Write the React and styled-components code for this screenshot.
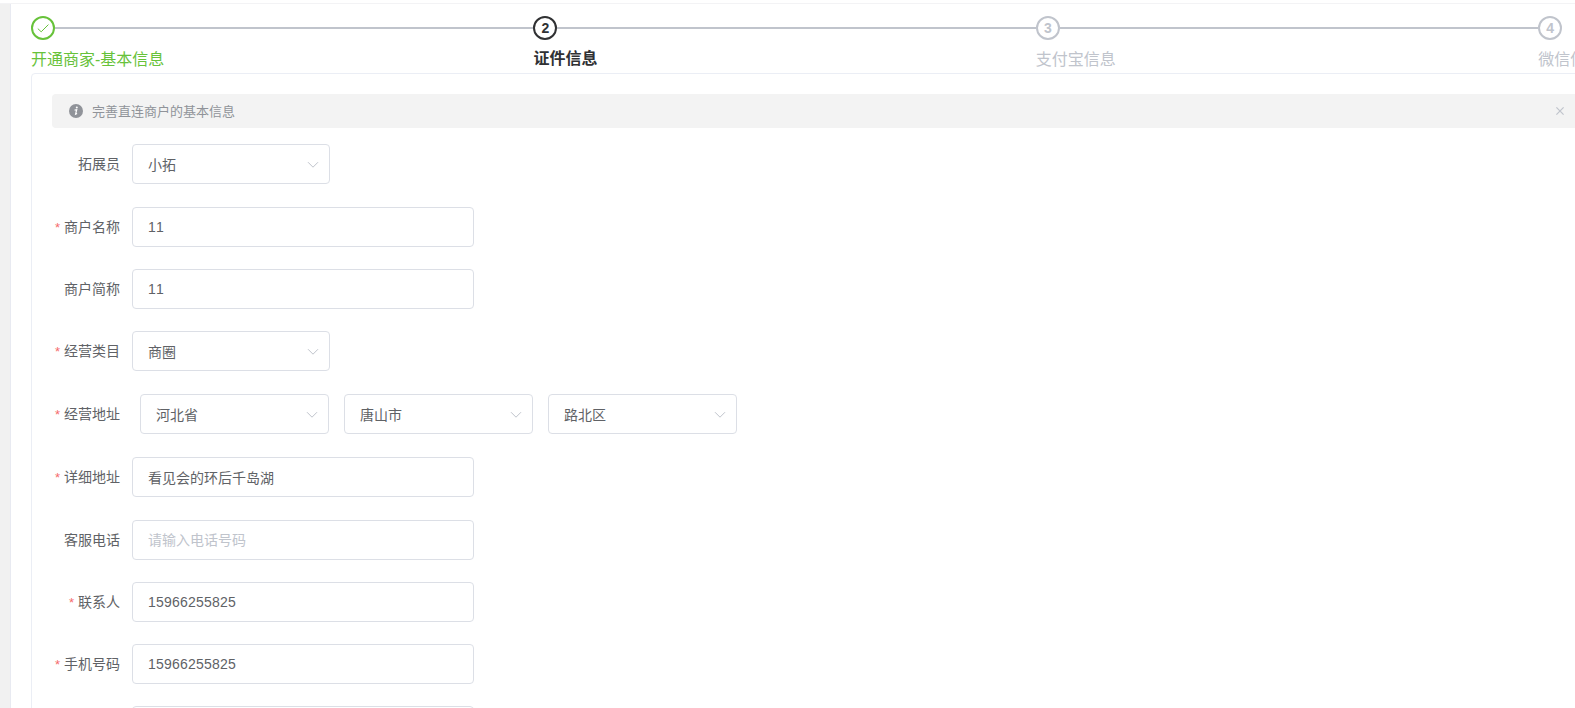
import React, { useState } from "react";
import styled, { createGlobalStyle, css } from "styled-components";

const GlobalStyle = createGlobalStyle`
  * {
    box-sizing: border-box;
  }
  body {
    margin: 0;
    height: 100vh;
    overflow: hidden;
    background-color: #fff;
    font-family: "Liberation Sans", "Noto Sans CJK SC", sans-serif;
    font-size: 14px;
    color: #606266;
  }
`;

const Page = styled.div`
  height: 708px;
  padding-top: 3px;
  overflow: hidden;
`;
const Layout = styled.div`
  display: flex;
  height: 705px;
  border-top: 1px solid #f3f3f5;
`;
const Sidebar = styled.div`
  flex: 0 0 11px;
  background-color: #f1f1f1;
  border-right: 1px solid #e8eaf1;
`;
const Main = styled.main`
  flex: none;
  width: 2030px;
  padding: 12px 0 0 20px;
`;

const Steps = styled.div`
  display: flex;
  height: 57px;
`;
const stepColors = {
  success: "#67c23a",
  process: "#303133",
  wait: "#c0c4cc",
};
const StepItem = styled.div`
  flex: 0 0 502.4px;
  color: ${(props) => stepColors[props.$status]};
`;
const StepHead = styled.div`
  display: flex;
  align-items: center;
`;
const StepIcon = styled.div`
  display: flex;
  justify-content: center;
  align-items: center;
  width: 24px;
  height: 24px;
  border: 2px solid;
  border-radius: 50%;
  font-size: 14px;
  font-weight: 700;
  line-height: 1;
`;
const StepLine = styled.div`
  flex: 1;
  height: 2px;
  background-color: #c0c4cc;
`;
const StepTitle = styled.div`
  font-size: 16px;
  line-height: 40px;
  white-space: nowrap;
  ${(props) =>
    props.$status === "process" &&
    css`
      font-weight: 700;
      line-height: 38px;
    `}
`;

const Card = styled.section`
  height: 900px;
  padding: 20px;
  border: 1px solid #ebeef5;
  border-radius: 4px;
`;
const Alert = styled.div`
  display: flex;
  align-items: center;
  width: 1523px;
  height: 34px;
  padding: 0 11px 0 17px;
  margin-bottom: 16px;
  background-color: #f3f3f3;
  border-radius: 4px 0 0 4px;
  color: #909399;
  font-size: 13px;
`;
const AlertText = styled.span`
  flex: 1;
  margin-left: 9px;
  padding-bottom: 2px;
`;
const CloseButton = styled.button`
  display: flex;
  padding: 0;
  border: none;
  background: none;
  color: #c0c4cc;
  cursor: pointer;
`;

const FormItem = styled.div`
  display: flex;
  height: 40px;
  margin-bottom: ${(props) => props.$gap}px;
`;
const Label = styled.label`
  width: 80px;
  padding-right: 12px;
  line-height: 40px;
  text-align: right;
  white-space: nowrap;
`;
const Star = styled.span`
  margin-right: 4px;
  color: #f56c6c;
  font-size: 13px;
  line-height: 1;
`;
const Input = styled.input`
  width: 342px;
  height: 40px;
  padding: 0 15px;
  border: 1px solid #dcdfe6;
  border-radius: 4px;
  outline: none;
  background-color: #fff;
  color: #606266;
  font-family: inherit;
  font-size: 14px;
  font-kerning: none;
  letter-spacing: ${(props) => (props.$numeric ? "0.22px" : "normal")};
  &::placeholder {
    color: #c0c4cc;
  }
  &:focus {
    border-color: #409eff;
  }
`;
const SelectBox = styled.div`
  display: flex;
  justify-content: space-between;
  align-items: center;
  width: ${(props) => props.$width}px;
  height: 40px;
  padding: 1px 10px 0 15px;
  border: 1px solid #dcdfe6;
  border-radius: 4px;
  cursor: pointer;
`;
const SelectText = styled.span`
  padding-bottom: 2px;
`;
const SelectGroup = styled.div`
  display: flex;
  gap: 15px;
  margin-left: 8px;
`;

const steps = [
  { title: "开通商家-基本信息", status: "success" },
  { title: "证件信息", status: "process" },
  { title: "支付宝信息", status: "wait" },
  { title: "微信信息", status: "wait" },
];

const fields = [
  { name: "expander", label: "拓展员", type: "select", gap: 23 },
  { name: "name", label: "商户名称", required: true, gap: 22 },
  { name: "shortName", label: "商户简称", gap: 22 },
  { name: "category", label: "经营类目", type: "select", required: true, gap: 23 },
  { name: "region", label: "经营地址", type: "region", required: true, gap: 23 },
  { name: "address", label: "详细地址", required: true, gap: 23 },
  { name: "servicePhone", label: "客服电话", placeholder: "请输入电话号码", gap: 22 },
  { name: "contact", label: "联系人", required: true, gap: 22 },
  { name: "mobile", label: "手机号码", required: true, gap: 22 },
  { name: "email", label: "", gap: 22 },
];

function CheckIcon() {
  return (
    <svg width="12" height="10" viewBox="0 0 12 10" fill="none" stroke="currentColor">
      <path d="M0.8 5.6 4.2 8.8 11.4 1.6" />
    </svg>
  );
}

function InfoIcon() {
  return (
    <svg width="14" height="14" viewBox="0 0 14 14">
      <circle cx="7" cy="7" r="7" fill="#909399" />
      <circle cx="7.8" cy="3.6" r="1" fill="#fff" />
      <path
        d="M5.6 6.1 7.7 5.7 6.6 10.2 8.1 9.5"
        fill="none"
        stroke="#fff"
        strokeWidth="1.2"
      />
    </svg>
  );
}

function Arrow() {
  return (
    <svg width="12" height="8" viewBox="0 0 12 8" fill="none" stroke="#c0c4cc">
      <path d="M1 1.2 6 6.2 11 1.2" />
    </svg>
  );
}

function Select({ value, width }) {
  return (
    <SelectBox $width={width}>
      <SelectText>{value}</SelectText>
      <Arrow />
    </SelectBox>
  );
}

export default function App() {
  const [showAlert, setShowAlert] = useState(true);
  const [formData, setFormData] = useState({
    expander: "小拓",
    name: "11",
    shortName: "11",
    category: "商圈",
    region: ["河北省", "唐山市", "路北区"],
    address: "看见会的环后千岛湖",
    servicePhone: "",
    contact: "15966255825",
    mobile: "15966255825",
    email: "",
  });

  function handleChange(e) {
    const { name, value } = e.target;
    setFormData((prevFormData) => ({ ...prevFormData, [name]: value }));
  }

  function renderField(field) {
    const value = formData[field.name];
    if (field.type === "select") {
      return <Select value={value} width={198} />;
    }
    if (field.type === "region") {
      return (
        <SelectGroup>
          {value.map((item) => (
            <Select key={item} value={item} width={189} />
          ))}
        </SelectGroup>
      );
    }
    return (
      <Input
        name={field.name}
        value={value}
        placeholder={field.placeholder}
        $numeric={/^\d+$/.test(value)}
        onChange={handleChange}
      />
    );
  }

  return (
    <>
      <GlobalStyle />
      <Page>
        <Layout>
          <Sidebar />
          <Main>
            <Steps>
              {steps.map((step, index) => (
                <StepItem key={step.title} $status={step.status}>
                  <StepHead>
                    <StepIcon>
                      {step.status === "success" ? <CheckIcon /> : index + 1}
                    </StepIcon>
                    {index < steps.length - 1 && <StepLine />}
                  </StepHead>
                  <StepTitle $status={step.status}>{step.title}</StepTitle>
                </StepItem>
              ))}
            </Steps>
            <Card>
              {showAlert && (
                <Alert>
                  <InfoIcon />
                  <AlertText>完善直连商户的基本信息</AlertText>
                  <CloseButton onClick={() => setShowAlert(false)}>
                    <svg width="8" height="8" viewBox="0 0 8 8" stroke="currentColor">
                      <path d="M0.4 0.4 7.6 7.6M7.6 0.4 0.4 7.6" strokeWidth="1.2" />
                    </svg>
                  </CloseButton>
                </Alert>
              )}
              {fields.map((field) => (
                <FormItem key={field.name} $gap={field.gap}>
                  <Label>
                    {field.required && <Star>*</Star>}
                    {field.label}
                  </Label>
                  {renderField(field)}
                </FormItem>
              ))}
            </Card>
          </Main>
        </Layout>
      </Page>
    </>
  );
}
